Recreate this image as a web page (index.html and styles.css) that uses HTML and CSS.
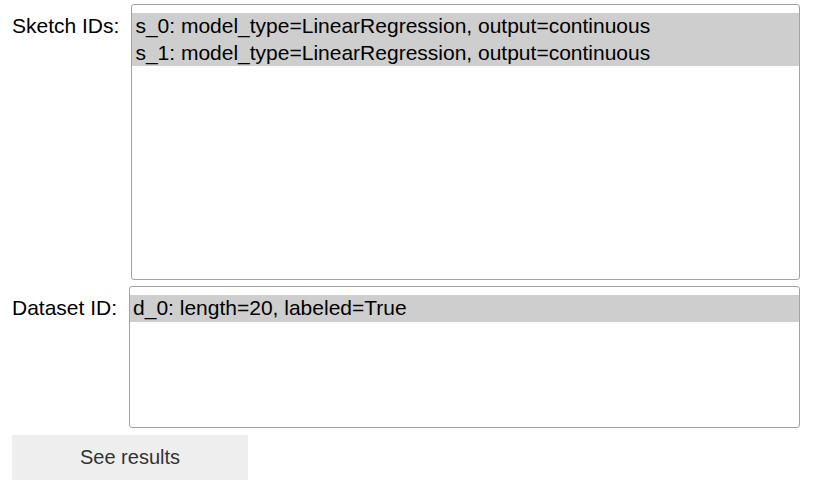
FILE: index.html
```html
<!DOCTYPE html>
<html>
<head>
<meta charset="utf-8">
<link rel="stylesheet" href="styles.css">
</head>
<body>
<div class="page">
  <div class="field">
    <label class="label">Sketch IDs:</label>
    <div class="listbox tall" role="listbox" aria-multiselectable="true">
      <div class="option selected" role="option">s_0: model_type=LinearRegression, output=continuous</div>
      <div class="option selected" role="option">s_1: model_type=LinearRegression, output=continuous</div>
    </div>
  </div>
  <div class="field">
    <label class="label">Dataset ID:</label>
    <div class="listbox short" role="listbox">
      <div class="option selected" role="option">d_0: length=20, labeled=True</div>
    </div>
  </div>
  <button class="btn">See results</button>
</div>
</body>
</html>
```
FILE: styles.css
```css
html, body {
  margin: 0;
  padding: 0;
  background: #ffffff;
}
body {
  font-family: "Liberation Sans", Arial, sans-serif;
  font-size: 21px;
  color: #000;
}
.page {
  padding: 4px 16px 0 12px;
  display: flex;
  flex-direction: column;
  gap: 6px;
  align-items: flex-start;
}
.field {
  display: flex;
  align-items: flex-start;
  gap: 12px;
  width: 100%;
}
.label {
  white-space: nowrap;
  line-height: 26.5px;
  padding-top: 9px;
}
.listbox {
  flex: 1;
  box-sizing: border-box;
  border: 1px solid #a3a3a3;
  border-radius: 3px;
  padding: 8px 0 0 0;
  background: #fff;
  overflow: hidden;
}
.tall { height: 276px; }
.short { height: 142px; }
.option {
  line-height: 26.5px;
  padding-left: 3px;
  white-space: nowrap;
}
.option.selected {
  background: #cecece;
}
.btn {
  width: 236px;
  height: 45px;
  border: none;
  background: #eeeeee;
  color: #333333;
  font-family: "Liberation Sans", Arial, sans-serif;
  font-size: 20px;
  padding: 0;
  margin: 1px 0 0 0;
}
```
